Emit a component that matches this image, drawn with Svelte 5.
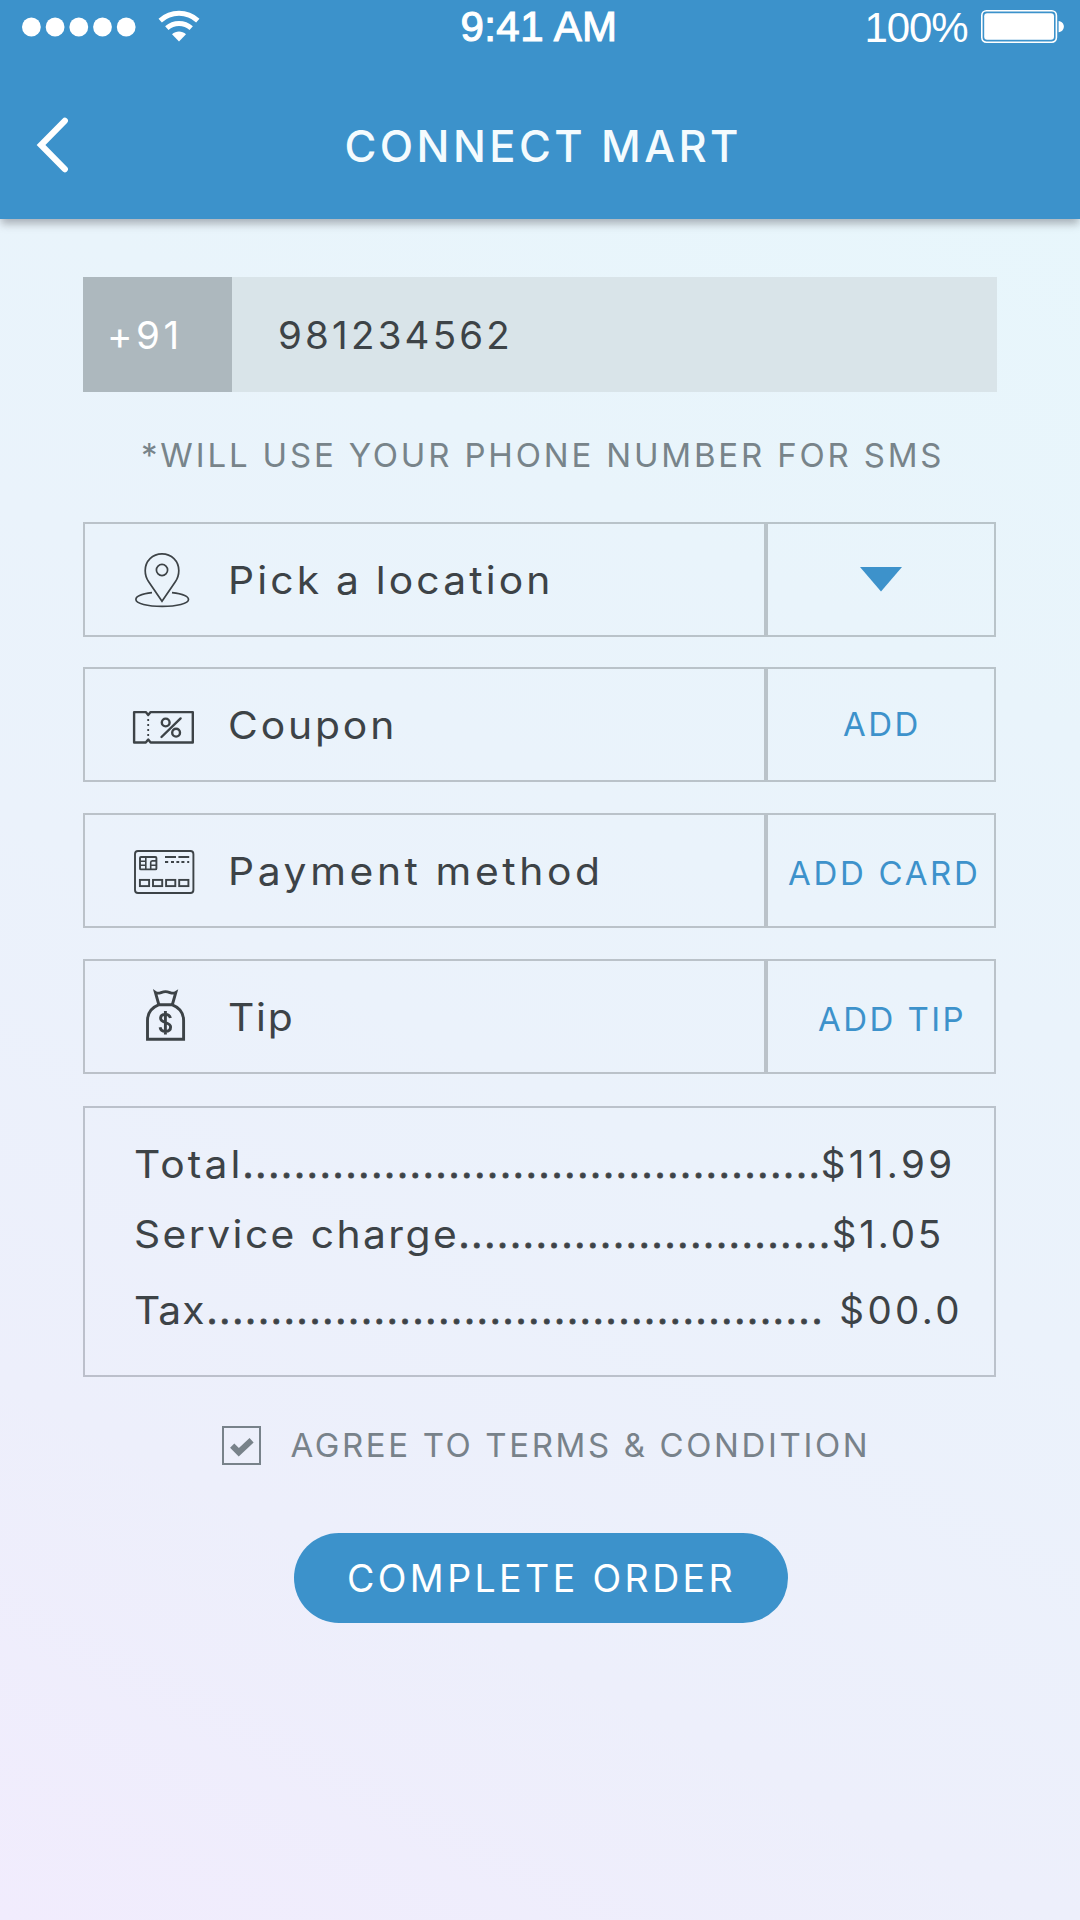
<script>
  const options = [
    { id: 'location', label: 'Pick a location', action: '' },
    { id: 'coupon', label: 'Coupon', action: 'ADD' },
    { id: 'payment', label: 'Payment method', action: 'ADD CARD' },
    { id: 'tip', label: 'Tip', action: 'ADD TIP' }
  ];

  const charges = [
    { id: 'total', label: 'Total', dots: 45, amount: '$11.99' },
    { id: 'service', label: 'Service charge', dots: 29, amount: '$1.05' },
    { id: 'tax', label: 'Tax', dots: 48, amount: '$00.0' }
  ];

  let agreed = $state(true);
</script>

<div class="screen">
  <header>
    <div class="status">
      <div class="signal">
        <svg class="dots" width="114" height="20" viewBox="0 0 114 20">
          {#each [0, 1, 2, 3, 4] as i}
            <circle cx={9.4 + i * 23.7} cy="10" r="9.4" fill="#fff" />
          {/each}
        </svg>
        <svg class="wifi" width="42" height="34" viewBox="0 0 42 34">
          <g fill="none" stroke="#fff" stroke-width="5">
            <path d="M2.2 10.6C13 .9 29 .9 39.8 10.6" />
            <path d="M8.8 18.2C15.8 11.9 26.2 11.9 33.2 18.2" />
          </g>
          <path d="M14 24.2C18 20.6 24 20.6 28 24.2L21 31.6Z" fill="#fff" />
        </svg>
      </div>
      <span class="time">9:41 AM</span>
      <div class="power">
        <span class="percent">100%</span>
        <svg width="84" height="34" viewBox="0 0 84 34">
          <rect x=".8" y=".8" width="74.6" height="31.4" rx="4.6" fill="none" stroke="#fff" stroke-width="1.6" />
          <rect x="3.2" y="3.2" width="69.8" height="26.6" rx="3" fill="#fff" />
          <path d="M77.6 11C84.6 11.6 84.6 21.6 77.6 22.2Z" fill="#fff" />
        </svg>
      </div>
    </div>
    <nav>
      <button class="back" aria-label="Back">
        <svg width="36" height="56" viewBox="0 0 36 56">
          <path d="M29.8 3.8L6 28L29.8 52.2" fill="none" stroke="#fff" stroke-width="6.2" stroke-linecap="round" stroke-linejoin="miter" />
        </svg>
      </button>
      <h1>CONNECT MART</h1>
    </nav>
  </header>

  <main>
    <div class="phone">
      <span class="prefix">+91</span>
      <span class="number">981234562</span>
    </div>
    <p class="note">*WILL USE YOUR PHONE NUMBER FOR SMS</p>

    <div class="options">
      {#each options as o}
        <div class="row {o.id}">
          <div class="cell main-cell">
            <svg class="icon" width="66" height="111" viewBox="0 0 66 111">
              {#if o.id === 'location'}
                <g fill="none" stroke="#3d4347" stroke-width="1.7">
                  <path d="M32 77.3L18.5 57.5C16 53.8 15.2 51 15.2 46.5C15.2 37 22.5 29.8 32 29.8S48.8 37 48.8 46.5C48.8 51 48 53.8 45.5 57.5Z" />
                  <circle cx="32" cy="46" r="5.6" />
                  <path d="M22 68.6C12 69.8 5.9 72.4 5.9 75.5C5.9 79.5 17.5 82.4 32.2 82.4S58.5 79.5 58.5 75.5C58.5 72.4 52 69.8 42 68.6" />
                </g>
              {:else if o.id === 'coupon'}
                <g fill="none" stroke="#3d4347" stroke-width="2.4">
                  <path d="M4.1 43.1H15.8L18.2 46L20.6 43.1H62.8V73.5H20.6L18.2 70.6L15.8 73.5H4.1Z" stroke-linejoin="round" />
                  <path d="M18.2 50V69" stroke-width="1.8" stroke-dasharray="2 3" />
                  <circle cx="35.7" cy="53.5" r="3.9" />
                  <circle cx="46.1" cy="63.7" r="3.9" />
                  <path d="M50.6 49.4L31.5 68" stroke-linecap="round" />
                </g>
              {:else if o.id === 'payment'}
                <g fill="none" stroke="#3d4347" stroke-width="1.9">
                  <rect x="5" y="36" width="58.4" height="42" rx="3" />
                  <rect x="10" y="42" width="16.4" height="12.4" rx="1" />
                  <path d="M15.8 42V54.4M10 46.2H15.8M10 50.3H15.8M26.4 45.9H22.3Q20.7 45.9 20.7 47.6V54.4M20.7 50.3H26.4" stroke-width="1.6" />
                  <path d="M35 42H46M48.4 42H59.2" />
                  <path d="M35 47H38.2M41 47H44M46.4 47H49.2M51.4 47H54.4M57.2 47H59.2" />
                  {#each [0, 1, 2, 3] as i}
                    <rect x={9.9 + i * 13.1} y="64.9" width="9.2" height="6.2" />
                  {/each}
                </g>
              {:else}
                <g fill="none" stroke="#3d4347" stroke-width="2.9">
                  <path d="M17.5 78.3V59.5C17.5 51.5 22.5 46.2 28.5 43.8H42.3C48.5 46.2 53.6 51.5 53.6 59.5V78.3Z" />
                  <path d="M28.8 43.5L25.4 31.4C29 33.8 31 30.6 35.5 30.6S42 33.8 45.8 31.4L42.4 43.5" />
                  <path d="M40.4 57C39.8 54.3 38 53.4 35.4 53.4C32.2 53.4 30.6 55 30.6 57.3C30.6 62.3 40.6 60.7 40.6 66C40.6 68.8 38.4 70.3 35.4 70.3C32.4 70.3 30.5 68.8 30.1 66.2M35.4 50V73.6" />
                </g>
              {/if}
            </svg>
            <span class="label">{o.label}</span>
          </div>
          <div class="cell action-cell">
            {#if o.action}
              <span class="action">{o.action}</span>
            {:else}
              <svg class="caret" width="42" height="25" viewBox="0 0 42 25">
                <path d="M0 0H42L21 24.5Z" fill="#3d92cb" />
              </svg>
            {/if}
          </div>
        </div>
      {/each}
    </div>

    <div class="summary">
      {#each charges as c}
        <div class="line {c.id}">
          <span class="name">{c.label}</span>
          <span class="leader">{'.'.repeat(c.dots)}</span>
          <span class="amount">{c.amount}</span>
        </div>
      {/each}
    </div>

    <div class="terms">
      <button class="check" role="checkbox" aria-checked={agreed} aria-label="Agree" onclick={() => (agreed = !agreed)}>
        {#if agreed}
          <svg width="35" height="35" viewBox="0 0 35 35">
            <path d="M8.2 17.6L14.8 24.2L27.6 12.2" fill="none" stroke="#78828a" stroke-width="6" />
          </svg>
        {/if}
      </button>
      <span class="agree">AGREE TO TERMS &amp; CONDITION</span>
    </div>

    <button class="submit">COMPLETE ORDER</button>
  </main>
</div>

<style>
  :global(body) {
    margin: 0;
  }
  .screen {
    width: 1080px;
    height: 1920px;
    overflow: hidden;
    box-sizing: border-box;
    font-family: Inter, 'Liberation Sans', sans-serif;
    color: #3d4347;
    background: linear-gradient(207deg, #e7f7fc 0%, #e9f4fb 30%, #ebf2fb 55%, #edeffb 78%, #f1ecfd 100%);
    white-space: nowrap;
  }
  button {
    border: 0;
    padding: 0;
    margin: 0;
    background: none;
    font: inherit;
    color: inherit;
    text-align: left;
    display: flex;
    box-sizing: border-box;
  }
  svg {
    display: block;
    flex: none;
  }

  header {
    height: 219px;
    background: #3c92cb;
    color: #fff;
    box-shadow: 0 6px 8px -1px rgba(60, 60, 70, 0.36);
  }
  .status {
    height: 54px;
    display: grid;
    grid-template-columns: 1fr auto 1fr;
    font: 42px/54px 'Liberation Sans', sans-serif;
  }
  .signal {
    display: flex;
    align-items: flex-start;
    padding-left: 22px;
  }
  .dots {
    margin-top: 16.5px;
  }
  .wifi {
    margin: 9.5px 0 0 21.5px;
  }
  .time {
    margin-right: 2px;
    letter-spacing: 0.4px;
    -webkit-text-stroke: 1.1px #fff;
  }
  .power {
    display: flex;
    justify-content: flex-end;
    align-items: flex-start;
    padding-right: 15.5px;
  }
  .percent {
    padding-top: 1px;
    letter-spacing: -1.1px;
    margin-right: 13px;
  }
  .power svg {
    margin-top: 10px;
  }
  nav {
    height: 165px;
    box-sizing: border-box;
    padding: 18px 0 0 35px;
    display: flex;
    align-items: center;
  }
  .back {
    margin-top: -2px;
  }
  h1 {
    margin: 0 0 0 273.5px;
    font-size: 43.5px;
    font-weight: 500;
    line-height: 60px;
    letter-spacing: 3.42px;
    color: #f4fbfe;
  }

  main {
    padding: 58px 84px 0 83px;
  }
  .phone {
    display: flex;
    height: 115px;
    margin-right: -1px;
    font-size: 38.5px;
    line-height: 115px;
    background: #d9e4e9;
  }
  .prefix {
    width: 149px;
    box-sizing: border-box;
    padding: 1px 0 0 24px;
    background: #adb8be;
    color: #fff;
    letter-spacing: 3.6px;
  }
  .number {
    padding: 1px 0 0 46px;
    letter-spacing: 3.2px;
  }
  .note {
    margin: 46px 0 50px 58px;
    font-size: 33px;
    line-height: 34px;
    letter-spacing: 2.83px;
    color: #78848a;
  }

  .options {
    display: flex;
    flex-direction: column;
    gap: 31px;
  }
  .row {
    display: grid;
    grid-template-columns: 683px 230px;
    height: 115px;
  }
  .location {
    margin-bottom: -1px;
  }
  .cell {
    border: 2px solid rgba(70, 75, 80, 0.29);
    display: flex;
    align-items: center;
  }
  .main-cell {
    padding-left: 45px;
  }
  /* slightly extended letterforms for mixed-case labels */
  .label,
  .name {
    transform: scaleX(1.06);
    transform-origin: left center;
  }
  .label {
    margin-left: 32px;
    padding-top: 1px;
    font-size: 38.5px;
    line-height: 50px;
  }
  .location .label {
    letter-spacing: 2.95px;
    word-spacing: -0.8px;
  }
  .coupon .label {
    letter-spacing: 2.7px;
  }
  .payment .label {
    letter-spacing: 3.4px;
    word-spacing: -1px;
  }
  .tip .label {
    letter-spacing: 1.65px;
  }
  .action {
    font-size: 33px;
    line-height: 40px;
    color: #3d92cb;
  }
  .caret {
    margin-left: 92px;
  }
  .coupon .action {
    padding: 0 0 2px 75px;
    letter-spacing: 2.4px;
  }
  .payment .action {
    padding: 5px 0 0 20px;
    letter-spacing: 2.7px;
  }
  .tip .action {
    padding: 5px 0 0 50px;
    letter-spacing: 2.45px;
  }

  .summary {
    margin-top: 32px;
    height: 271px;
    box-sizing: border-box;
    border: 2px solid rgba(70, 75, 85, 0.29);
    padding: 33px 0 0 49px;
    font-size: 38.5px;
    line-height: 46px;
  }
  .line {
    display: flex;
  }
  .name {
    flex: none;
  }
  .leader {
    letter-spacing: 1.78px;
    -webkit-text-stroke: 0.8px #3d4347;
  }
  .total .name {
    width: 108.5px;
    letter-spacing: 2.9px;
  }
  .total .amount {
    margin-left: -1px;
    letter-spacing: 3.36px;
  }
  .service {
    margin-top: 24px;
  }
  .service .name {
    width: 324.5px;
    letter-spacing: 2.28px;
  }
  .service .amount {
    letter-spacing: 2.81px;
  }
  .tax {
    margin-top: 30px;
  }
  .tax .name {
    width: 72.5px;
    letter-spacing: 0.9px;
  }
  .tax .amount {
    margin-left: 15px;
    letter-spacing: 3.4px;
  }

  .terms {
    margin: 49px 0 0 139px;
    height: 39px;
    display: flex;
    gap: 29.5px;
    color: #78828a;
  }
  .check {
    width: 39px;
    height: 39px;
    flex: none;
    border: 2px solid #78828a;
  }
  .agree {
    font-size: 33px;
    line-height: 39px;
    letter-spacing: 2.62px;
  }
  .submit {
    width: 494px;
    height: 90px;
    margin: 68px 0 0 211px;
    padding: 1px 0 0 53px;
    border-radius: 45px;
    background: #3c92cb;
    color: #fff;
    font-size: 37.5px;
    line-height: 90px;
    letter-spacing: 3.4px;
  }
</style>
